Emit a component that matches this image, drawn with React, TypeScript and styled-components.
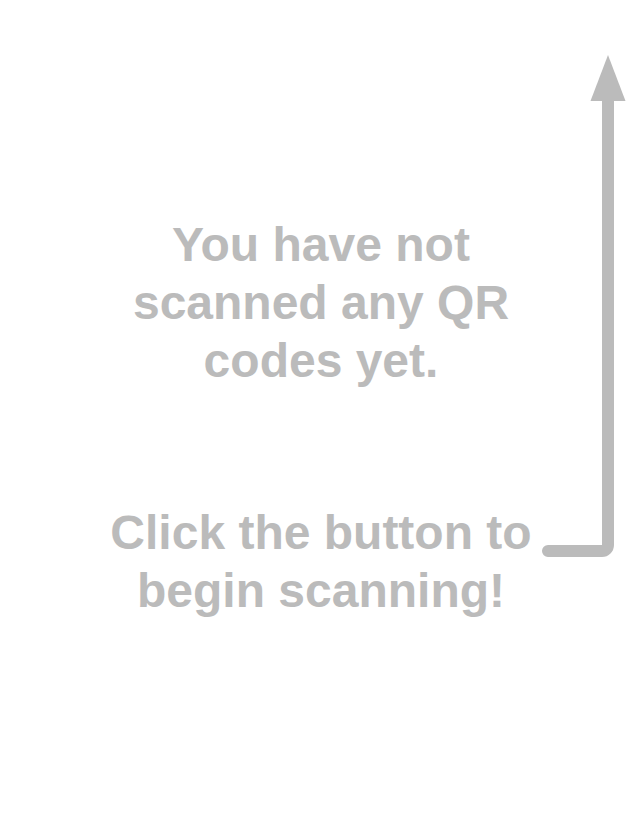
import React from "react";
import styled, { createGlobalStyle } from "styled-components";

const GlobalStyle = createGlobalStyle`
  html, body {
    margin: 0;
    padding: 0;
    background: #ffffff;
  }
  body {
    font-family: "Liberation Sans", Arial, Helvetica, sans-serif;
  }
`;

const Page = styled.main`
  position: relative;
  width: 642px;
  height: 832px;
  box-sizing: border-box;
  padding-top: 216px;
  display: flex;
  flex-direction: column;
  align-items: center;
  gap: 114px;
  overflow: hidden;
`;

const Message = styled.p`
  width: 450px;
  margin: 0;
  text-align: center;
  font-family: "Liberation Sans", Arial, Helvetica, sans-serif;
  font-weight: 700;
  font-size: 48px;
  line-height: 58px;
  color: #bbbbbb;
`;

const HintArrow = styled.svg`
  position: absolute;
  top: 0;
  left: 0;
  pointer-events: none;
`;

export default function App() {
  return (
    <>
      <GlobalStyle />
      <Page>
        <Message>You have not scanned any QR codes yet.</Message>
        <Message>Click the button to begin scanning!</Message>
        <HintArrow width="642" height="832" viewBox="0 0 642 832" aria-hidden="true">
          <path
            d="M548 551 H602 A6 6 0 0 0 608 545 V100"
            fill="none"
            stroke="#bbbbbb"
            strokeWidth="12"
            strokeLinecap="round"
          />
          <polygon points="608,55 590.5,101 625.5,101" fill="#bbbbbb" />
        </HintArrow>
      </Page>
    </>
  );
}
